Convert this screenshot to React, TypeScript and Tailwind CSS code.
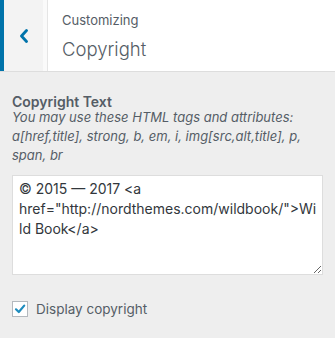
export default function App() {
  return (
    <div
      className="h-[338px] w-[335px] overflow-hidden bg-[#eeeeee] text-[#555d66]"
      style={{ fontFamily: 'Inter, "Liberation Sans", sans-serif' }}
    >
      <header className="flex h-[72px] border-b border-[#dddddd] bg-white">
        <div className="w-1 bg-[#0073aa]" />
        <button className="flex w-[39px] items-center justify-center bg-[#f3f3f3]">
          <svg width="10" height="14" viewBox="0 0 10 14" aria-hidden="true">
            <path d="M7.5 1.5 L2.5 7 L7.5 12.5" fill="none" stroke="#0073aa" strokeWidth="2.8" strokeLinecap="round" strokeLinejoin="round" />
          </svg>
        </button>
        <div className="w-1 bg-[#fafafa]" />
        <div className="w-px bg-[#e5e5e5]" />
        <div className="flex flex-col pl-[14px] pt-[10px]">
          <span className="text-[13px] leading-[20px] text-[#555d66]">Customizing</span>
          <span className="mt-[6px] text-[18.5px] font-light leading-[26px] text-[#555d66]">Copyright</span>
        </div>
      </header>

      <section className="px-3 pt-[23px]">
        <label className="block text-sm font-semibold leading-[14px] text-[#555d66]">Copyright Text</label>
        <p className="mt-[-1px] text-[13px] italic leading-[19px] text-[#555d66]">
          You may use these HTML tags and attributes: a[href,title], strong, b, em, i, img[src,alt,title], p, span, br
        </p>
        <textarea
          className="mt-[10px] block h-[100px] w-full resize-y border border-[#dddddd] bg-white pl-[6px] pr-[4px] pt-[3px] text-sm leading-[20px] text-[#32373c] outline-none"
          defaultValue={'\u00a9 2015 \u2014 2017 <a href="http://nordthemes.com/wildbook/">Wild Book</a>'}
        />
        <label className="mt-[26px] flex items-center gap-[8px]">
          <span className="flex h-4 w-4 items-center justify-center border border-[#b4b9be] bg-white">
            <svg width="12" height="12" viewBox="0 0 12 12" aria-hidden="true">
              <path d="M2 6.3 L4.8 9 L10.2 2.6" fill="none" stroke="#1e8cbe" strokeWidth="2.2" strokeLinecap="round" strokeLinejoin="round" />
            </svg>
          </span>
          <span className="text-[13.5px] leading-4 text-[#555d66]">Display copyright</span>
        </label>
      </section>
    </div>
  )
}
